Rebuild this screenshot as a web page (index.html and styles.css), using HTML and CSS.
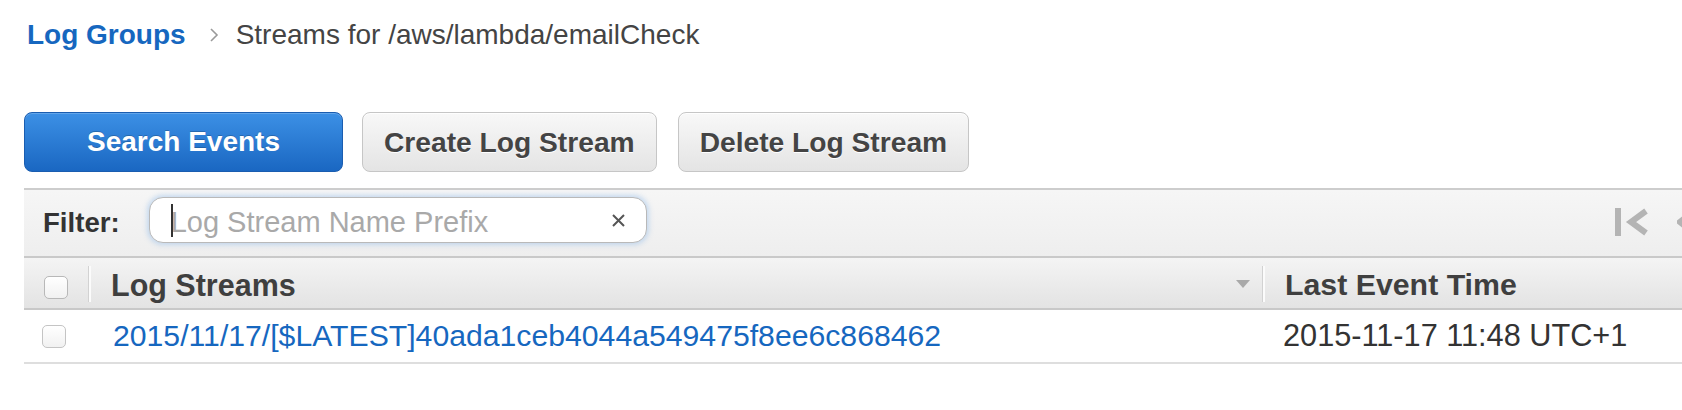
FILE: index.html
```html
<!DOCTYPE html>
<html lang="en">
<head>
<meta charset="utf-8">
<title>Streams for /aws/lambda/emailCheck</title>
<link rel="stylesheet" href="styles.css">
</head>
<body>
<div class="page">
  <nav class="crumbs">
    <a class="crumb-link" href="#">Log Groups</a>
    <svg class="chev" width="10" height="14" viewBox="0 0 10 14"><polyline points="2,1 8,7 2,13" fill="none" stroke="#9a9a9a" stroke-width="1.6"/></svg>
    <span class="crumb-current">Streams for /aws/lambda/emailCheck</span>
  </nav>

  <div class="actions">
    <button class="btn btn-primary">Search Events</button>
    <button class="btn">Create Log Stream</button>
    <button class="btn">Delete Log Stream</button>
  </div>

  <div class="grid">
    <div class="filterbar">
      <span class="filter-label">Filter:</span>
      <div class="search">
        <span class="caret"></span>
        <span class="placeholder">Log Stream Name Prefix</span>
        <svg class="clear" width="13" height="13" viewBox="0 0 13 13"><path d="M1 1 L12 12 M12 1 L1 12" stroke="#555" stroke-width="2" fill="none"/></svg>
      </div>
      <div class="pager">
        <svg width="34" height="28" viewBox="0 0 34 28"><rect x="0" y="0" width="6" height="28" fill="#b4b4b4"/><polyline points="31,3 16,14 31,25" fill="none" stroke="#b4b4b4" stroke-width="6"/></svg>
        <svg width="20" height="28" viewBox="0 0 20 28"><polyline points="17,3 3,14 17,25" fill="none" stroke="#b4b4b4" stroke-width="6"/></svg>
      </div>
    </div>

    <div class="thead">
      <div class="col-check"><span class="cb cb-head"></span></div>
      <div class="col-name">
        <span class="sep"></span>
        <span class="th-text th-name">Log Streams</span>
        <span class="sort"></span>
      </div>
      <div class="col-time">
        <span class="sep"></span>
        <span class="th-text th-time">Last Event Time</span>
      </div>
    </div>

    <div class="trow">
      <div class="col-check row-check"><span class="cb"></span></div>
      <div class="col-name row-name"><a class="stream-link" href="#">2015/11/17/[$LATEST]40ada1ceb4044a549475f8ee6c868462</a></div>
      <div class="col-time row-time">2015-11-17 11:48 UTC+1</div>
    </div>
  </div>
</div>
</body>
</html>
```

FILE: styles.css
```css
* { box-sizing: border-box; }
html, body { margin: 0; padding: 0; }
body {
  font-family: "Liberation Sans", Arial, Helvetica, sans-serif;
  background: #fff;
  width: 1682px;
  height: 410px;
  overflow: hidden;
}
.page { padding-left: 24px; }

.crumbs {
  display: flex;
  align-items: center;
  padding-top: 19px;
  padding-left: 3px;
  font-size: 28px;
  line-height: 32px;
}
.crumb-link { color: #1667bf; font-weight: bold; text-decoration: none; }
.chev { margin: 0 17px 0 23px; flex: none; }
.crumb-current { color: #444; }

.actions { display: flex; gap: 19px; margin-top: 61px; }
.btn {
  height: 60px;
  padding: 0 21px;
  border-radius: 8px;
  font-family: "Liberation Sans", Arial, sans-serif;
  font-weight: bold;
  font-size: 28.2px;
  line-height: 1;
  border: 1px solid #c6c6c6;
  background: linear-gradient(#f8f8f8, #e4e4e4);
  color: #444;
  text-shadow: 0 1px 0 #fff;
  box-shadow: inset 0 1px 0 rgba(255,255,255,.8);
}
.btn + .btn + .btn { margin-left: 2px; }
.btn-primary {
  min-width: 319px;
  font-size: 28px;
  background: linear-gradient(#3c90e5, #1a67c2);
  border-color: #1a5db0;
  color: #fff;
  text-shadow: 0 -1px 0 rgba(0,0,0,.2);
  box-shadow: inset 0 1px 0 rgba(255,255,255,.2);
}

.grid { margin-top: 16px; width: 1700px; }

.filterbar {
  display: flex;
  align-items: center;
  height: 70px;
  border-top: 2px solid #cdcdcd;
  border-bottom: 2px solid #c9c9c9;
  background: linear-gradient(#f6f6f6, #eeeeee);
  padding-left: 19px;
}
.filter-label {
  font-weight: bold;
  font-size: 27.6px;
  line-height: 1;
  color: #333;
  margin-right: 29px;
}
.search {
  position: relative;
  width: 498px;
  height: 46px;
  margin-bottom: 6px;
  border: 1px solid #b9b9b9;
  border-radius: 14px;
  background: #fff;
  box-shadow: 0 0 5px 2px rgba(140, 185, 232, .45);
  display: flex;
  align-items: center;
  padding: 0 21px;
}
.caret {
  position: absolute;
  left: 21px;
  top: 6px;
  width: 2px;
  height: 33px;
  background: #333;
}
.placeholder {
  font-size: 29px;
  line-height: 1;
  color: #a9a9a9;
  margin-top: 4px;
}
.clear { margin-left: auto; flex: none; }

.pager {
  display: flex;
  align-items: center;
  gap: 28px;
  margin-left: 968px;
  margin-bottom: 3px;
}

.thead {
  display: flex;
  align-items: center;
  height: 52px;
  border-bottom: 2px solid #c8c8c8;
  background: linear-gradient(#f4f4f4, #e3e3e3);
}
.trow {
  display: flex;
  align-items: center;
  height: 54px;
  border-bottom: 2px solid #dedede;
  background: #fff;
}
.col-check { width: 65px; flex: none; display: flex; align-items: center; padding-left: 20px; }
.col-name { width: 1174px; flex: none; display: flex; align-items: center; }
.col-time { flex: 1; display: flex; align-items: center; }

.sep {
  width: 2px;
  height: 36px;
  margin-top: 2px;
  background: #fbfbfb;
  box-shadow: -1px 0 0 #d2d2d2;
  flex: none;
}
.th-text {
  font-weight: bold;
  line-height: 1;
  color: #3f3f3f;
  margin-left: 20px;
  padding-top: 5px;
}
.th-name { font-size: 30.5px; }
.th-time { font-size: 30.3px; }
.sort {
  margin-left: auto;
  margin-right: 13px;
  margin-top: 2px;
  width: 0;
  height: 0;
  border-left: 7.5px solid transparent;
  border-right: 7.5px solid transparent;
  border-top: 8px solid #a9a9a9;
}

.cb {
  display: block;
  width: 24px;
  height: 23px;
  border: 1px solid #b8b8b8;
  border-radius: 5px;
  background: linear-gradient(#ffffff, #f1f1f1);
}
.cb-head { margin-top: 9px; }
.row-check { padding-left: 18px; }
.row-check .cb { border-color: #c4c4c4; }

.row-name { padding-left: 24px; }
.row-time { padding-left: 20px; }
.stream-link {
  font-size: 30.2px;
  line-height: 1;
  color: #1667bf;
  text-decoration: none;
}
.row-time {
  font-size: 30.7px;
  line-height: 1;
  color: #333;
}
```
